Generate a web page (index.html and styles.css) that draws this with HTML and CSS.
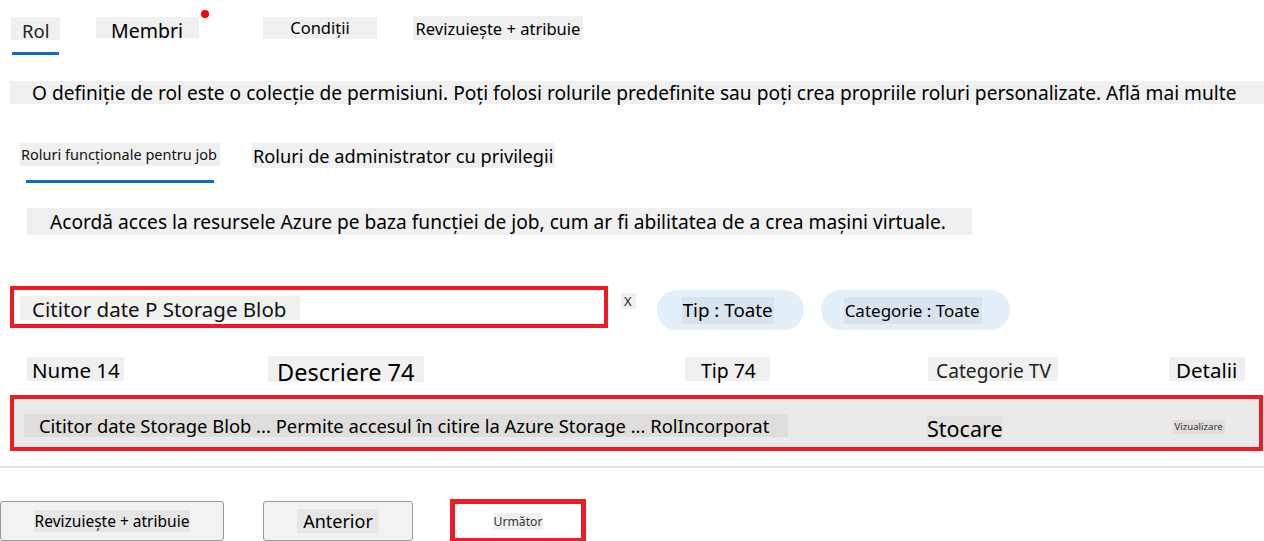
FILE: index.html
```html
<!DOCTYPE html>
<html lang="ro">
<head>
<meta charset="utf-8">
<title>Adăugare atribuire de rol</title>
<link rel="stylesheet" href="styles.css">
</head>
<body>
<div class="page">
  <nav class="tabs">
    <div class="tab tab-rol active"><span class="lbl">Rol</span></div>
    <div class="tab tab-membri"><span class="lbl">Membri</span><span class="dot"></span></div>
    <div class="tab tab-cond"><span class="lbl">Condiții</span></div>
    <div class="tab tab-rev"><span class="lbl">Revizuiește + atribuie</span></div>
  </nav>

  <p class="intro">O definiție de rol este o colecție de permisiuni. Poți folosi rolurile predefinite sau poți crea propriile roluri personalizate. Află mai multe</p>

  <nav class="subtabs">
    <div class="subtab sub-job active"><span class="lbl">Roluri funcționale pentru job</span></div>
    <div class="subtab sub-admin"><span class="lbl">Roluri de administrator cu privilegii</span></div>
  </nav>

  <p class="subdesc">Acordă acces la resursele Azure pe baza funcției de job, cum ar fi abilitatea de a crea mașini virtuale.</p>

  <div class="filters">
    <div class="search"><span class="search-text">Cititor date P Storage Blob</span></div>
    <span class="clear">X</span>
    <div class="pill pill-tip"><span>Tip : Toate</span></div>
    <div class="pill pill-cat"><span>Categorie : Toate</span></div>
  </div>

  <div class="thead">
    <span class="th th-nume">Nume 14</span>
    <span class="th th-desc">Descriere 74</span>
    <span class="th th-tip">Tip 74</span>
    <span class="th th-cat">Categorie TV</span>
    <span class="th th-det">Detalii</span>
  </div>

  <div class="row">
    <span class="cell cell-main">Cititor date Storage Blob ... Permite accesul în citire la Azure Storage ... RolIncorporat</span>
    <span class="cell cell-cat">Stocare</span>
    <span class="cell cell-view">Vizualizare</span>
  </div>

  <hr class="sep">

  <div class="actions">
    <button class="btn btn-rev"><span>Revizuiește + atribuie</span></button>
    <button class="btn btn-prev"><span>Anterior</span></button>
    <button class="btn btn-next"><span>Următor</span></button>
  </div>
</div>
</body>
</html>
```

FILE: styles.css
```css
* { box-sizing: border-box; }
html, body { margin: 0; padding: 0; background: #fff; }
body {
  font-family: "Noto Sans", "Open Sans", "DejaVu Sans", sans-serif;
  color: #000;
  width: 1264px;
  height: 541px;
  overflow: hidden;
}
.page { display: flex; flex-direction: column; }

/* main tabs */
.tabs {
  display: flex;
  align-items: flex-start;
  height: 56px;
  padding-top: 17px;
}
.tab { position: relative; display: flex; flex-direction: column; }
.tab .lbl {
  background: #f0f0f0;
  height: 22px;
  line-height: 24px;
  white-space: nowrap;
  overflow: visible;
}
.tab-rol { margin-left: 11px; }
.tab-rol .lbl { font-size: 18.5px; padding: 0 0 0 11px; color: #222; width: 49px; height: 23px; line-height: 27px; }
.tab-rol.active::after {
  content: "";
  display: block;
  margin-top: 12px;
  height: 3px;
  width: 47px;
  margin-left: 1px;
  background: #0f6cbd;
}
.tab-membri { margin-left: 36px; }
.tab-membri .lbl { font-size: 19.5px; padding: 0 0 0 15px; width: 103px; line-height: 27px; height: 21px; }
.dot {
  position: absolute;
  right: -10px;
  top: -7px;
  width: 8px;
  height: 8px;
  border-radius: 50%;
  background: #f00;
}
.tab-cond { margin-left: 64px; }
.tab-cond .lbl { font-size: 16.5px; width: 114px; text-align: center; line-height: 22px; }
.tab-rev { margin-left: 36px; margin-top: -1px; }
.tab-rev .lbl { font-size: 16.5px; width: 170px; text-align: center; height: 24px; line-height: 26px; }

/* intro */
.intro {
  margin: 25px 0 0 10px;
  height: 23px;
  background: #f0f0f0;
  font-size: 19.15px;
  line-height: 25px;
  padding-left: 22px;
  white-space: nowrap;
}

/* sub tabs */
.subtabs {
  display: flex;
  align-items: flex-start;
  margin-top: 39px;
  height: 65px;
}
.subtab .lbl { background: #f0f0f0; white-space: nowrap; display: block; }
.sub-job { margin-left: 20px; display: flex; flex-direction: column; }
.sub-job .lbl { font-size: 14.5px; height: 23px; line-height: 23px; padding: 0 1px; width: 200px; color: #111; }
.sub-job.active::after {
  content: "";
  display: block;
  margin: 14px 0 0 6px;
  width: 188px;
  height: 3px;
  background: #0f6cbd;
}
.sub-admin { margin-left: 32px; }
.sub-admin .lbl { font-size: 18.2px; height: 25px; line-height: 26px; width: 303px; padding-left: 1px; }

/* sub description */
.subdesc {
  margin: 0 0 0 27px;
  width: 945px;
  height: 27px;
  background: #f0f0f0;
  font-size: 19.15px;
  line-height: 28px;
  padding-left: 23px;
  white-space: nowrap;
}

/* filters */
.filters {
  display: flex;
  align-items: flex-start;
  margin-top: 51px;
  height: 63px;
}
.search {
  margin-left: 10px;
  width: 598px;
  height: 42px;
  border: 4px solid #ed1c24;
  padding: 6px 0 0 6px;
}
.search-text {
  display: inline-block;
  background: #f0f0f0;
  font-size: 20.5px;
  height: 24px;
  line-height: 26px;
  padding: 0 12px;
  width: 280px;
  color: #111;
  white-space: nowrap;
}
.clear {
  margin: 7px 0 0 13px;
  background: #f0f0f0;
  font-size: 13px;
  line-height: 16px;
  padding: 0 4px 0 3px;
  color: #222;
}
.pill {
  height: 40px;
  border-radius: 20px;
  background: #e3eff9;
  display: flex;
  align-items: center;
  margin-top: 4px;
}
.pill span { background: #d9e3ee; white-space: nowrap; line-height: 27px; height: 27px; }
.pill-tip { margin-left: 21px; width: 147px; padding-left: 25px; }
.pill-tip span { font-size: 18.8px; width: 92px; padding-left: 1px; }
.pill-cat { margin-left: 17px; width: 189px; padding-left: 23px; }
.pill-cat span { font-size: 17px; width: 138px; padding-left: 1px; }

/* table header */
.thead {
  display: flex;
  align-items: flex-start;
  height: 38px;
  margin-top: 8px;
}
.th { background: #f0f0f0; white-space: nowrap; height: 24px; line-height: 27px; }
.th-nume { margin-left: 27px; font-size: 20.5px; width: 97px; padding-left: 5px; }
.th-desc { margin-left: 144px; font-size: 23.5px; width: 156px; padding-left: 9px; height: 26px; line-height: 32px; margin-top: -1px; }
.th-tip { margin-left: 261px; font-size: 19.4px; width: 85px; padding-left: 16px; }
.th-cat { margin-left: 158px; font-size: 19.2px; width: 130px; padding-left: 8px; color: #222; }
.th-det { margin-left: 111px; font-size: 20.5px; width: 76px; padding-left: 7px; }

/* row */
.row {
  display: flex;
  align-items: flex-start;
  margin-left: 10px;
  width: 1253px;
  height: 56px;
  border: 4px solid #ed1c24;
  background: #ebeae8;
}
.cell { white-space: nowrap; }
.cell-main {
  margin: 15px 0 0 10px;
  background: #dfdedc;
  font-size: 18.4px;
  height: 23px;
  line-height: 24px;
  width: 764px;
  padding-left: 15px;
}
.cell-cat { margin: 17px 0 0 139px; font-size: 21.5px; background: #e3e2e0; line-height: 25px; height: 23px; }
.cell-view { margin: 21px 0 0 170px; font-size: 9.6px; background: #dfdedc; line-height: 14px; padding: 0 2px; color: #333; }

.sep {
  margin: 15px 0 0 0;
  border: 0;
  border-top: 2px solid #e3e3e3;
  height: 0;
}

/* actions */
.actions {
  display: flex;
  align-items: flex-start;
  margin-top: 31px;
}
.btn {
  font-family: inherit;
  background: #f3f2f1;
  border: 1px solid #999;
  border-radius: 3px;
  height: 40px;
  padding: 0;
  display: flex;
  align-items: center;
  justify-content: center;
  color: #000;
}
.btn span { background: #e6e6e6; white-space: nowrap; }
.btn-rev { width: 224px; margin-left: 0; margin-top: 2px; }
.btn-rev span { font-size: 15.5px; line-height: 22px; padding: 0 1px; }
.btn-prev { width: 150px; margin-left: 39px; margin-top: 2px; }
.btn-prev span { font-size: 18px; line-height: 24px; padding: 0 6px; }
.btn-next {
  width: 136px;
  height: 44px;
  margin-left: 37px;
  background: #fff;
  border: 5px solid #ed1c24;
  border-radius: 0;
}
.btn-next span { font-size: 12.2px; line-height: 17px; background: #f0f0f0; color: #333; padding: 0 1px; }
```
